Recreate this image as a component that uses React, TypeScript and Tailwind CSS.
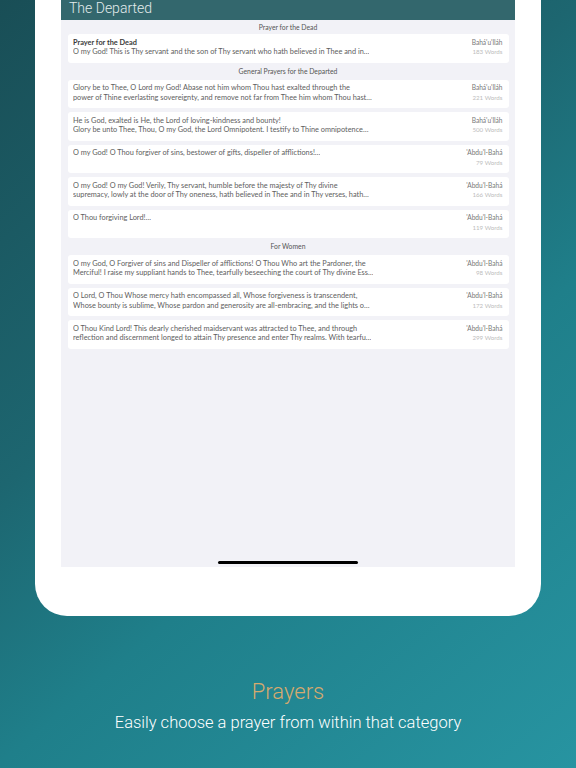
import React from "react";

type Row = {
  title?: string;
  lines: string[];
  author: string;
  words: string;
};

type Section = { name: string; rows: Row[] };

const sections: Section[] = [
  {
    name: "Prayer for the Dead",
    rows: [
      {
        title: "Prayer for the Dead",
        lines: [
          "O my God! This is Thy servant and the son of Thy servant who hath believed in Thee and in…",
        ],
        author: "Bahá'u'lláh",
        words: "183 Words",
      },
    ],
  },
  {
    name: "General Prayers for the Departed",
    rows: [
      {
        lines: [
          "Glory be to Thee, O Lord my God! Abase not him whom Thou hast exalted through the",
          "power of Thine everlasting sovereignty, and remove not far from Thee him whom Thou hast…",
        ],
        author: "Bahá'u'lláh",
        words: "221 Words",
      },
      {
        lines: [
          "He is God, exalted is He, the Lord of loving-kindness and bounty!",
          "Glory be unto Thee, Thou, O my God, the Lord Omnipotent. I testify to Thine omnipotence…",
        ],
        author: "Bahá'u'lláh",
        words: "500 Words",
      },
      {
        lines: ["O my God! O Thou forgiver of sins, bestower of gifts, dispeller of afflictions!…"],
        author: "'Abdu'l-Bahá",
        words: "79 Words",
      },
      {
        lines: [
          "O my God! O my God! Verily, Thy servant, humble before the majesty of Thy divine",
          "supremacy, lowly at the door of Thy oneness, hath believed in Thee and in Thy verses, hath…",
        ],
        author: "'Abdu'l-Bahá",
        words: "166 Words",
      },
      {
        lines: ["O Thou forgiving Lord!…"],
        author: "'Abdu'l-Bahá",
        words: "119 Words",
      },
    ],
  },
  {
    name: "For Women",
    rows: [
      {
        lines: [
          "O my God, O Forgiver of sins and Dispeller of afflictions! O Thou Who art the Pardoner, the",
          "Merciful! I raise my suppliant hands to Thee, tearfully beseeching the court of Thy divine Ess…",
        ],
        author: "'Abdu'l-Bahá",
        words: "98 Words",
      },
      {
        lines: [
          "O Lord, O Thou Whose mercy hath encompassed all, Whose forgiveness is transcendent,",
          "Whose bounty is sublime, Whose pardon and generosity are all-embracing, and the lights o…",
        ],
        author: "'Abdu'l-Bahá",
        words: "172 Words",
      },
      {
        lines: [
          "O Thou Kind Lord! This dearly cherished maidservant was attracted to Thee, and through",
          "reflection and discernment longed to attain Thy presence and enter Thy realms. With tearfu…",
        ],
        author: "'Abdu'l-Bahá",
        words: "299 Words",
      },
    ],
  },
];

function Card({ row }: { row: Row }) {
  return (
    <div className="ml-[6.5px] mr-[6.5px] h-[28.5px] shrink-0 rounded-[3px] bg-white flex justify-between pl-[5.5px] pr-[6px] pt-[3.5px]">
      <div className="flex flex-col text-[7.35px] leading-[9.6px] text-[#606060] whitespace-nowrap overflow-hidden">
        {row.title && <div className="font-bold text-[#3a3a3a]">{row.title}</div>}
        {row.lines.map((l, i) => (
          <div key={i}>{l}</div>
        ))}
      </div>
      <div className="flex flex-col items-end shrink-0 pl-2 whitespace-nowrap">
        <div className="text-[6.6px] leading-[9.6px] text-[#777]">{row.author}</div>
        <div className="text-[6.2px] leading-[9.6px] text-[#bdbdbd]">{row.words}</div>
      </div>
    </div>
  );
}

export default function App() {
  return (
    <div
      className="w-[576px] h-[768px] overflow-hidden flex flex-col bg-[linear-gradient(140deg,#194e56_0%,#1d6670_39%,#1f7f8a_61%,#2794a1_100%)]"
      style={{ fontFamily: "Lato, 'Noto Sans', sans-serif" }}
    >
      <div className="ml-[35px] w-[506px] h-[616px] shrink-0 bg-white rounded-b-[32px] px-[26px] pb-[49px] flex">
        <div className="flex-1 bg-[#f2f2f7] flex flex-col">
          <div
            className="h-[20px] shrink-0 bg-[#33676d] text-[#e3ecec] text-[14px] leading-[16px] font-light pl-[8px]"
            style={{ fontFamily: "Roboto, 'Liberation Sans', sans-serif" }}
          >
            The Departed
          </div>
          {sections.map((s, si) => (
            <React.Fragment key={s.name}>
              <div
                className={`${si === 0 ? "h-[14px]" : "h-[17px]"} shrink-0 flex items-center justify-center text-[6.8px] text-[#555]`}
              >
                {s.name}
              </div>
              <div className="flex flex-col gap-[4px]">
                {s.rows.map((r, ri) => (
                  <Card key={ri} row={r} />
                ))}
              </div>
            </React.Fragment>
          ))}
          <div className="mt-auto mb-[3px] mx-auto w-[140px] h-[3px] rounded-full bg-black" />
        </div>
      </div>
      <div
        className="mt-[63px] flex flex-col items-center font-light"
        style={{ fontFamily: "Roboto, 'Liberation Sans', sans-serif" }}
      >
        <div className="text-[22px] leading-[26px] text-[#d6aa6e]">Prayers</div>
        <div className="mt-[7px] text-[16.5px] leading-[22px] text-white">
          Easily choose a prayer from within that category
        </div>
      </div>
    </div>
  );
}
